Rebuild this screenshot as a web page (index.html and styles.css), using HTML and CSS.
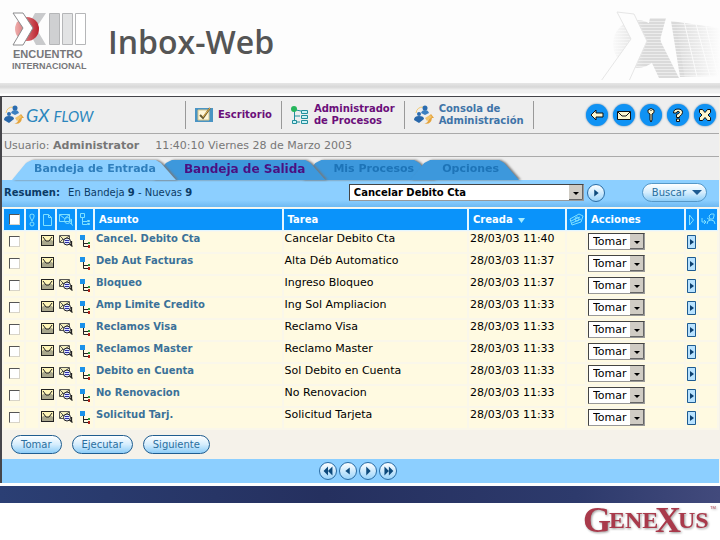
FILE: index.html
```
<!DOCTYPE html>
<html lang="es">
<head>
<meta charset="utf-8">
<title>Inbox-Web</title>
<link rel="stylesheet" href="styles.css">
</head>
<body>
<svg class="defs" aria-hidden="true">
  <symbol id="mail" viewBox="0 0 13 11"><path d="M0 0h13v11H0z" fill="#222"/><path d="M1 1h11v6H1z" fill="#fff6b8"/><path d="M1 10V6l3-2h5l3 2v4z" fill="#a9a78c"/><path d="M2 2l3 4h3l3-4" fill="#fff6b8" stroke="#222"/></symbol>
  <symbol id="mailsearch" viewBox="0 0 14 12"><path d="M.5.500h10v7H.5z" fill="#f4efbc" stroke="#555"/><path d="M1 1l4 4 5-4M1 7l3-3" fill="none" stroke="#555"/><circle cx="8" cy="6.500" r="3.500" fill="#dfe6ff" stroke="#222"/><path d="M6 5.500h4M6 7.500h4" stroke="#2c2ca8"/><path d="M10.500 9l3 2.500M12.500 6v5" stroke="#222" stroke-width="1.300"/></symbol>
  <symbol id="tree" viewBox="0 0 11 13"><path d="M3.500 5v6.500H8M3.500 8.500H8" fill="none" stroke="#222"/><path d="M0 0h5v5H0z" fill="#1c92ea"/><path d="M8 7h2v2H8z" fill="#2f9a3a"/><path d="M8 10h2v3H8z" fill="#b02318"/></symbol>
  <symbol id="people" viewBox="0 0 20 20"><path d="M8 18q6 2 7-5h-2l4-4 3 4h-2q-1 8-10 5z" fill="#e6a43c"/><path d="M2 8q1-6 7-6" fill="none" stroke="#f2c76f" stroke-width="1"/><circle cx="11" cy="3" r="2.500" fill="#2b6cb0"/><path d="M7 8q1-3 4-3t4 3l-4 2z" fill="#3b7fc0"/><circle cx="5" cy="9" r="2" fill="#2b6cb0"/><path d="M0 15q0-4 5-4t5 3l-5 4z" fill="#2867aa"/><path d="M11 13l5-3 2 2-5 4z" fill="#f0c36c"/></symbol>
  <symbol id="run" viewBox="0 0 9 14"><path d="M.5.500h8v13h-8z" fill="#b8e2ff" stroke="#1d5b92"/><path d="M3 4l4 3-4 3z" fill="#0a3f70"/></symbol>
</svg>

<header class="banner">
  <svg class="event" viewBox="0 0 76 60" role="img" aria-label="XIII Encuentro Internacional">
    <defs><linearGradient id="red"><stop offset="0" stop-color="#efb0ae"/><stop offset="1" stop-color="#b9202c"/></linearGradient></defs>
    <path d="M23 1h11L24 16l10 17H24L15 16z" fill="#c9cacc"/>
    <circle cx="15" cy="17" r="12" fill="url(#red)"/>
    <path d="M1 1h10l10 15-10 17H1l10-17z" fill="#fff" stroke="#8c8c8e"/>
    <g stroke="#b5b6b8"><path d="M37.500 1.500h10v31h-10z" fill="#cfd0d2"/><path d="M50.500 1.500h10v31h-10z" fill="#e2e3e4"/><path d="M63.500 1.500h10v31h-10z" fill="#fff"/></g>
    <text x="1" y="46" class="event-a">ENCUENTRO</text>
    <text x="0" y="57" class="event-b">INTERNACIONAL</text>
  </svg>
  <h1>Inbox-Web</h1>
  <svg class="mark" viewBox="0 0 120 76" aria-hidden="true">
    <defs>
      <pattern id="scan" width="4" height="3" patternUnits="userSpaceOnUse"><path d="M0 0h4v2H0z" fill="#dadada"/><path d="M0 2h4v1H0z" fill="#ececec"/></pattern>
      <linearGradient id="fade"><stop offset="0" stop-color="#fdfdfd" stop-opacity="0"/><stop offset="1" stop-color="#fdfdfd"/></linearGradient>
      <linearGradient id="fadeleft"><stop offset="0" stop-color="#fdfdfd"/><stop offset="1" stop-color="#fdfdfd" stop-opacity="0"/></linearGradient>
    </defs>
    <path d="M50 14h16l-6 22 19 38H59L44 42z" fill="url(#scan)"/>
    <circle cx="37" cy="40" r="24" fill="url(#scan)"/>
    <path d="M10 14h34v54H10z" fill="url(#fadeleft)"/>
    <path d="M71 17l49 7v48l-40 1z" fill="url(#scan)"/>
    <path d="M84 17l13 56M96 20l14 52M106 22l12 50" stroke="#fafafa"/>
    <path d="M75 14h45v62H85z" fill="url(#fade)"/>
    <path d="M17 8l17 2 13 27-18 40H1l30-42z" fill="#fdfdfd" stroke="#e6e6e6"/>
  </svg>
</header>

<main class="window">
  <nav class="toolbar">
    <a class="brand" href="#"><svg width="20" height="20"><use href="#people"/></svg><span>GX <small>FLOW</small></span></a>
    <a class="tool" href="#"><svg width="18" height="16" viewBox="0 0 18 16"><path d="M0 1h18v14H0z" fill="#4a94c4"/><path d="M3 3h11v10H3z" fill="#fff7d8" stroke="#d7c68c"/><path d="M5 8l3 3 7-10" fill="none" stroke="#685c34" stroke-width="2"/><path d="M8 10l7-9" stroke="#efb84b"/></svg><span>Escritorio</span></a>
    <a class="tool" href="#"><svg width="18" height="18" viewBox="0 0 18 18"><path d="M3.500 4v12H9M3.500 10H9M5 4l5 1" fill="none" stroke="#218e9c"/><circle cx="3" cy="3" r="3" fill="#27b65c"/><g fill="#c9f2f5" stroke="#218e9c"><path d="M10.500 4.500h6v3h-6zM10.500 9.500h6v3h-6zM10.500 14.500h6v3h-6zM1.500 14.500h4v3h-4z"/></g></svg><span>Administrador<br>de Procesos</span></a>
    <a class="tool plain" href="#"><svg width="20" height="20"><use href="#people"/></svg><span>Consola de<br>Administración</span></a>
    <div class="rounds">
      <button aria-label="Volver"><svg viewBox="0 0 22 22"><path d="M5 11l5-5v3h7v4h-7v3z"/></svg></button>
      <button aria-label="Correo"><svg viewBox="0 0 22 22"><path d="M4.500 7.500h13v8h-13z"/><path d="M5 8l4 4h4l4-4" fill="none"/></svg></button>
      <button aria-label="Clave"><svg viewBox="0 0 22 22"><path d="M10 10q-3-1-2-4 3-3 6 0 1 3-2 4v6l-1 2-1-2z"/><path d="M11 6v1"/></svg></button>
      <button aria-label="Ayuda"><svg viewBox="0 0 22 22"><path d="M6.500 9q0-4 4.500-4t4.500 3.500q0 2-3 4v1h-3v-3q3-1 3-2t-1.500-1-1.500 1.500zM9.500 15h3v2.500h-3z"/></svg></button>
      <button aria-label="Cerrar"><svg viewBox="0 0 22 22"><path d="M5.500 5.500h3l2.500 3 2.500-3h3v3L14 11l2.500 2.500v3h-3l-2.500-3-2.500 3h-3v-3L8 11 5.500 8.500z"/></svg></button>
    </div>
  </nav>

  <div class="user"><span>Usuario: <b>Administrator</b></span><span>11:40:10 Viernes 28 de Marzo 2003</span></div>

  <ul class="tabs">
    <li class="first"><a href="#">Bandeja de Entrada</a></li>
    <li class="visited"><a href="#">Bandeja de Salida</a></li>
    <li><a href="#">Mis Procesos</a></li>
    <li><a href="#">Opciones</a></li>
  </ul>

  <form class="summary">
    <p><b>Resumen:</b> <span>En Bandeja <b>9</b> - Nuevas <b>9</b></span></p>
    <select class="drop wide" aria-label="Proceso"><option>Cancelar Debito Cta</option></select>
    <button type="button" class="go" aria-label="Ir"><svg viewBox="0 0 18 18"><path d="M7 5l5 4-5 4z"/></svg></button>
    <button type="button" class="pill search">Buscar <svg width="10" height="5" viewBox="0 0 10 5"><path d="M0 0h10L5 5z" fill="#1d5b92"/></svg></button>
  </form>

  <table>
    <colgroup><col class="c20"><col class="c12"><col class="c15"><col class="c18"><col class="c16"><col class="subject"><col><col class="c96"><col class="c18"><col class="c97"><col class="c11"><col class="c18"></colgroup>
    <thead><tr>
      <th><input type="checkbox" aria-label="Todos"></th>
      <th><svg width="8" height="14" viewBox="0 0 8 14"><path d="M4 1q-3 0-2 3l2 4 2-4q1-3-2-3z"/><circle cx="4" cy="11" r="2"/></svg></th>
      <th><svg width="11" height="12" viewBox="0 0 11 12"><path d="M1.500.500h5l3 3v8h-8zM6.500.500v3h3"/></svg></th>
      <th><svg width="15" height="12" viewBox="0 0 15 12"><path d="M.5.500h10v7H.5zl5 4 5-4"/><circle cx="8.500" cy="6.500" r="3"/><path d="M11 9l3 2.500M12.500 5v5"/></svg></th>
      <th><svg width="11" height="13" viewBox="0 0 11 13"><path d="M.5.500h4v4h-4zM2.500 5v6.500H7M2.500 8.500H7M7.500 7.500h2v1h-2zM7.500 10.500h2v1h-2z"/></svg></th>
      <th class="text">Asunto</th><th class="text">Tarea</th>
      <th class="text">Creada <svg class="sort" width="7" height="5" viewBox="0 0 7 5"><path d="M0 0h7L3.500 5z"/></svg></th>
      <th><svg width="15" height="13" viewBox="0 0 15 13"><path d="M1 6l9-5 4 2-2 6-9 3zM2 8l9-4M3 10l9-4"/><circle cx="8" cy="6" r="2"/></svg></th>
      <th class="text">Acciones</th>
      <th><svg width="7" height="12" viewBox="0 0 7 12"><path d="M1.500 1v10l4-5z"/></svg></th>
      <th><svg width="15" height="13" viewBox="0 0 15 13"><path d="M1 5v4h4M3 7l2 2-2 2M6 11q0-4 4-4t4 4M6 5l3 2M8 3l2-2h3v2l-1 3h-3z"/></svg></th>
    </tr></thead>
    <tbody>
      <tr><td><input type="checkbox" aria-label="Cancel. Debito Cta"></td><td></td><td><svg class="i13"><use href="#mail"/></svg></td><td><svg class="i14"><use href="#mailsearch"/></svg></td><td><svg class="i11"><use href="#tree"/></svg></td><td class="text"><a href="#">Cancel. Debito Cta</a></td><td class="text">Cancelar Debito Cta</td><td class="text">28/03/03 11:40</td><td></td><td class="act"><select class="drop" aria-label="Acción"><option>Tomar</option></select></td><td><button class="run" aria-label="Ejecutar tarea"><svg><use href="#run"/></svg></button></td><td></td></tr>
      <tr><td><input type="checkbox" aria-label="Deb Aut Facturas"></td><td></td><td><svg class="i13"><use href="#mail"/></svg></td><td></td><td><svg class="i11"><use href="#tree"/></svg></td><td class="text"><a href="#">Deb Aut Facturas</a></td><td class="text">Alta Déb Automatico</td><td class="text">28/03/03 11:37</td><td></td><td class="act"><select class="drop" aria-label="Acción"><option>Tomar</option></select></td><td><button class="run" aria-label="Ejecutar tarea"><svg><use href="#run"/></svg></button></td><td></td></tr>
      <tr><td><input type="checkbox" aria-label="Bloqueo"></td><td></td><td><svg class="i13"><use href="#mail"/></svg></td><td><svg class="i14"><use href="#mailsearch"/></svg></td><td><svg class="i11"><use href="#tree"/></svg></td><td class="text"><a href="#">Bloqueo</a></td><td class="text">Ingreso Bloqueo</td><td class="text">28/03/03 11:37</td><td></td><td class="act"><select class="drop" aria-label="Acción"><option>Tomar</option></select></td><td><button class="run" aria-label="Ejecutar tarea"><svg><use href="#run"/></svg></button></td><td></td></tr>
      <tr><td><input type="checkbox" aria-label="Amp Limite Credito"></td><td></td><td><svg class="i13"><use href="#mail"/></svg></td><td><svg class="i14"><use href="#mailsearch"/></svg></td><td><svg class="i11"><use href="#tree"/></svg></td><td class="text"><a href="#">Amp Limite Credito</a></td><td class="text">Ing Sol Ampliacion</td><td class="text">28/03/03 11:33</td><td></td><td class="act"><select class="drop" aria-label="Acción"><option>Tomar</option></select></td><td><button class="run" aria-label="Ejecutar tarea"><svg><use href="#run"/></svg></button></td><td></td></tr>
      <tr><td><input type="checkbox" aria-label="Reclamos Visa"></td><td></td><td><svg class="i13"><use href="#mail"/></svg></td><td><svg class="i14"><use href="#mailsearch"/></svg></td><td><svg class="i11"><use href="#tree"/></svg></td><td class="text"><a href="#">Reclamos Visa</a></td><td class="text">Reclamo Visa</td><td class="text">28/03/03 11:33</td><td></td><td class="act"><select class="drop" aria-label="Acción"><option>Tomar</option></select></td><td><button class="run" aria-label="Ejecutar tarea"><svg><use href="#run"/></svg></button></td><td></td></tr>
      <tr><td><input type="checkbox" aria-label="Reclamos Master"></td><td></td><td><svg class="i13"><use href="#mail"/></svg></td><td><svg class="i14"><use href="#mailsearch"/></svg></td><td><svg class="i11"><use href="#tree"/></svg></td><td class="text"><a href="#">Reclamos Master</a></td><td class="text">Reclamo Master</td><td class="text">28/03/03 11:33</td><td></td><td class="act"><select class="drop" aria-label="Acción"><option>Tomar</option></select></td><td><button class="run" aria-label="Ejecutar tarea"><svg><use href="#run"/></svg></button></td><td></td></tr>
      <tr><td><input type="checkbox" aria-label="Debito en Cuenta"></td><td></td><td><svg class="i13"><use href="#mail"/></svg></td><td><svg class="i14"><use href="#mailsearch"/></svg></td><td><svg class="i11"><use href="#tree"/></svg></td><td class="text"><a href="#">Debito en Cuenta</a></td><td class="text">Sol Debito en Cuenta</td><td class="text">28/03/03 11:33</td><td></td><td class="act"><select class="drop" aria-label="Acción"><option>Tomar</option></select></td><td><button class="run" aria-label="Ejecutar tarea"><svg><use href="#run"/></svg></button></td><td></td></tr>
      <tr><td><input type="checkbox" aria-label="No Renovacion"></td><td></td><td><svg class="i13"><use href="#mail"/></svg></td><td><svg class="i14"><use href="#mailsearch"/></svg></td><td><svg class="i11"><use href="#tree"/></svg></td><td class="text"><a href="#">No Renovacion</a></td><td class="text">No Renovacion</td><td class="text">28/03/03 11:33</td><td></td><td class="act"><select class="drop" aria-label="Acción"><option>Tomar</option></select></td><td><button class="run" aria-label="Ejecutar tarea"><svg><use href="#run"/></svg></button></td><td></td></tr>
      <tr><td><input type="checkbox" aria-label="Solicitud Tarj."></td><td></td><td><svg class="i13"><use href="#mail"/></svg></td><td><svg class="i14"><use href="#mailsearch"/></svg></td><td><svg class="i11"><use href="#tree"/></svg></td><td class="text"><a href="#">Solicitud Tarj.</a></td><td class="text">Solicitud Tarjeta</td><td class="text">28/03/03 11:33</td><td></td><td class="act"><select class="drop" aria-label="Acción"><option>Tomar</option></select></td><td><button class="run" aria-label="Ejecutar tarea"><svg><use href="#run"/></svg></button></td><td></td></tr>
    </tbody>
  </table>

  <div class="actions"><button class="pill">Tomar</button><button class="pill">Ejecutar</button><button class="pill">Siguiente</button></div>

  <nav class="pager">
    <button class="go" aria-label="Primera"><svg viewBox="0 0 18 18"><path d="M9 4v10L4 9zM14 4v10L9 9z"/></svg></button>
    <button class="go" aria-label="Anterior"><svg viewBox="0 0 18 18"><path d="M11 5v8L6 9z"/></svg></button>
    <button class="go" aria-label="Próxima"><svg viewBox="0 0 18 18"><path d="M7 4v10l5-5z"/></svg></button>
    <button class="go" aria-label="Última"><svg viewBox="0 0 18 18"><path d="M5 4v10l5-5zM10 4v10l5-5z"/></svg></button>
  </nav>
</main>

<footer>
  <div class="stripe"></div>
  <svg class="genexus" viewBox="0 0 132 36" role="img" aria-label="GeneXus">
    <g class="gx"><text x="0" y="28" class="big">G</text><text x="26" y="24">ENE</text><text x="72" y="28" class="big">X</text><text x="95" y="24">US</text></g>
    <text x="127" y="5" class="tm">TM</text>
  </svg>
</footer>
</body>
</html>
```
FILE: styles.css
```
* { box-sizing: border-box; }
body { margin: 0; background: #fff; font: 11px/14px "DejaVu Sans", sans-serif; color: #000; }
a { text-decoration: none; color: inherit; }
button, select { font: inherit; padding: 0; margin: 0; }
svg { display: block; flex: none; }
.defs { position: absolute; width: 0; height: 0; }

.banner { display: flex; align-items: center; height: 96px; padding: 0 0 12px 12px; background: linear-gradient(#fdfdfd 83px, #e6e6e6 83px, #d8d8d8 87px, #f0f0f0 90px, #f0f0f0 93px, #fff 94px); }
.event { width: 76px; height: 60px; }
.event-a { font: bold 11px "Liberation Sans", sans-serif; fill: #77777a; }
.event-b { font: bold 9px "Liberation Sans", sans-serif; fill: #77777a; }
h1 { margin: 0 0 0 20px; font: 600 32px/40px "Open Sans", sans-serif; color: #555; }
.mark { width: 120px; height: 76px; margin-left: auto; }

.window { border: solid #45454a; border-width: 1px 0 0 2px; background: #f5f2ea; padding-right: 1px; }
.toolbar { display: flex; align-items: center; height: 37px; background: #eee; border-bottom: 1px solid #aaa; }
.brand { display: flex; align-items: center; gap: 2px; width: 183px; padding-left: 2px; font: italic 18px/20px "Lato", sans-serif; color: #2b86bd; }
.brand small { font-size: 15px; }
.tool { display: flex; align-items: center; gap: 5px; height: 28px; padding: 0 9px; border-left: 1px solid #999; font-size: 10px; font-weight: bold; line-height: 12px; color: #6b0f7a; }
.tool.plain { color: #3f74a8; border-right: 1px solid #999; }
.rounds { display: flex; gap: 5px; margin-left: auto; padding-right: 3px; }
.rounds button { width: 22px; height: 22px; border: 0; border-radius: 50%; background: #0f92f4; box-shadow: 0 0 2px #3a74a8; }
.rounds path { fill: #fdf6cf; stroke: #111; }
.user { display: flex; gap: 16px; height: 23px; padding: 5px 2px 0; background: #eee; color: #777; border-bottom: 1px solid #aaa; }

.tabs { display: flex; align-items: flex-end; height: 23px; margin: 0; padding: 0 0 0 10px; list-style: none; background: #eee; }
.tabs li { position: relative; margin-left: -24px; filter: drop-shadow(2px 0 1px #777); z-index: 1; }
.tabs li.first { margin-left: 0; z-index: 3; }
.tabs li.visited { z-index: 2; }
.tabs a { display: block; height: 20px; padding: 2px 20px 0 32px; font-weight: bold; color: #1d74b8; background: #3d98dc; clip-path: polygon(0 100%, 14px 3px, 20px 0, calc(100% - 20px) 0, calc(100% - 15px) 3px, 100% 100%); }
.tabs .first a { padding-left: 22px; background: #8ccfff; color: #2f7fbd; }
.tabs .visited a { font-size: 12px; color: #4b1080; }

.summary { display: flex; align-items: center; height: 27px; padding: 0 12px 2px 2px; background: linear-gradient(#8ccfff 20px, #6db9f2); color: #0b3b66; font-size: 10px; }
.summary p { flex: 1; margin: 0; }
.summary p span { margin-left: 5px; }
.drop { appearance: none; display: block; width: 57px; height: 17px; padding: 0 16px 0 4px; border: 1px solid #999; border-top-color: #444; border-left-color: #444; border-radius: 0; color: #000; background: #fff url("data:image/svg+xml,%3Csvg xmlns='http://www.w3.org/2000/svg' width='14' height='15'%3E%3Cpath d='M0 0h14v15H0z' fill='%23d0ccc4'/%3E%3Cpath d='M0 14.5h13.500V0' fill='none' stroke='%23666'/%3E%3Cpath d='M4 7h6L7 10z'/%3E%3C/svg%3E") right center no-repeat; }
.drop.wide { width: 235px; font-weight: bold; }
.go { width: 18px; height: 18px; border: 1px solid #2b6da5; border-radius: 50%; background: linear-gradient(#fff, #9bd4fa); }
.go svg { width: 16px; height: 16px; }
.go path { fill: #0d4a7c; }
.summary .go { margin: 0 37px 0 3px; }
.pill { display: flex; align-items: center; gap: 6px; height: 19px; padding: 0 9px; border: 1px solid #1f5d90; border-radius: 10px; background: linear-gradient(#fff, #d5edfd 50%, #8ccdf8); color: #2a6f9f; font-size: 10px; }
.search { padding: 0 4px 0 9px; border-color: #5598c8; }

table { width: 100%; table-layout: fixed; border-collapse: separate; border-spacing: 2px; margin-bottom: -2px; background: #faf7ea; }
.c11 { width: 11px; } .c12 { width: 12px; } .c15 { width: 15px; } .c16 { width: 16px; } .c18 { width: 18px; } .c20 { width: 20px; }
.c96 { width: 96px; } .c97 { width: 97px; } .subject { width: 27%; }
th { height: 21px; padding: 0; background: #0a93fa; color: #fff; text-align: left; box-shadow: 0 0 0 1px #e4f6ff; }
th svg { margin: 0 auto; fill: none; stroke: #7fe0ff; }
th.text { padding-left: 4px; font-size: 10px; }
th .sort { display: inline-block; margin: 0 0 0 2px; fill: #a6ecff; stroke: none; }
td { height: 20px; padding: 1px 0 0; background: #fffae1; vertical-align: top; }
td svg { margin: 2px auto 0; }
td.text { padding: 0 0 0 1px; white-space: nowrap; }
td a { font-size: 10px; font-weight: bold; color: #3b7199; }
td.act { padding-left: 1px; }
input[type=checkbox] { appearance: none; display: block; width: 11px; height: 11px; margin: 0 auto; border: 1px solid #d8d4c8; border-top-color: #555; border-left-color: #555; background: #fff; }
td input[type=checkbox] { margin-top: 3px; }
.i13 { width: 13px; height: 11px; } .i14 { width: 14px; height: 12px; } .i11 { width: 11px; height: 13px; }
.run { display: block; width: 9px; height: 14px; margin: 2px auto 0; border: 0; background: none; }
.run svg { width: 9px; height: 14px; margin: 0; }

.actions { display: flex; gap: 10px; height: 31px; padding: 7px 9px 0; }
.pager { display: flex; justify-content: center; align-items: center; gap: 2px; height: 24px; padding-right: 6px; background: #8ccfff; }

.stripe { height: 20px; border-top: 3px solid #fff; background: linear-gradient(90deg, #2b3f74, #25305f 45%, #2d3a6c 80%, #424a7c); }
.genexus { width: 132px; height: 36px; margin: 1px 5px 0 auto; overflow: visible; filter: drop-shadow(1px 1px 1px #999); }
.gx { font: bold 24px "Liberation Serif", serif; fill: #a93a4b; }
.gx .big { font-size: 36px; }
.tm { font: 4px "Liberation Sans", sans-serif; fill: #a93a4b; }
```
